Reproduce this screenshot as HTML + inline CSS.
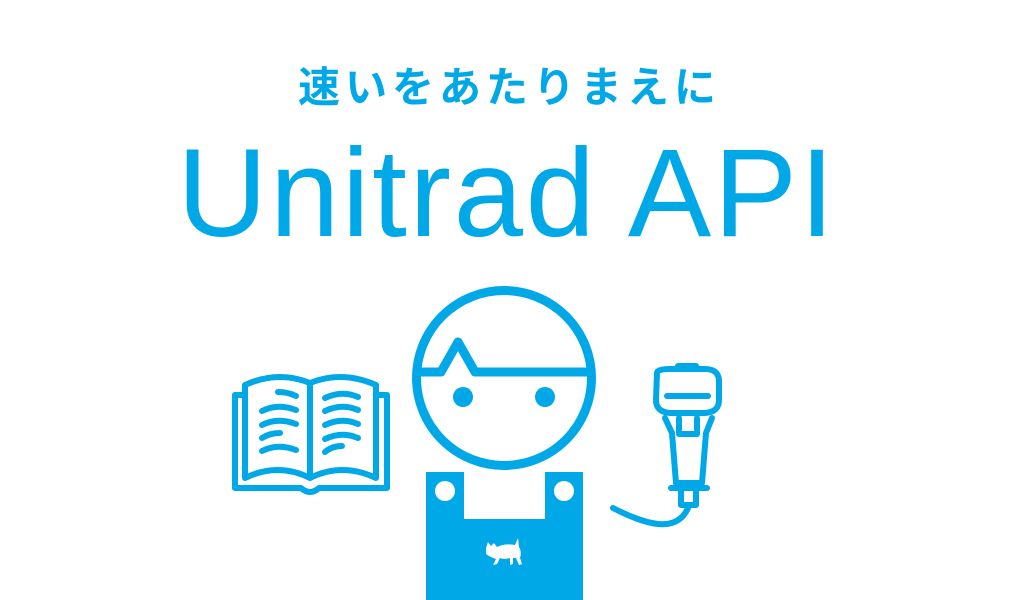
<!DOCTYPE html>
<html><head><meta charset="utf-8"><style>
html,body{margin:0;padding:0;background:#fff;width:1014px;height:600px;overflow:hidden;position:relative}
.jp{position:absolute;left:0;width:1014px;top:54px;text-align:center;font:bold 42px "Liberation Sans","Noto Sans CJK JP",sans-serif;color:#00a8e8;letter-spacing:5px;text-indent:5px}
.en{position:absolute;left:0;width:1014px;top:124px;text-align:center;font:125px "Liberation Sans",sans-serif;color:#00a8e8;letter-spacing:2.5px;line-height:140px}
svg{position:absolute;left:0;top:0}
</style></head><body>
<div class="jp">速いをあたりまえに</div>
<div class="en">Unitrad API</div>
<svg width="1014" height="600" viewBox="0 0 1014 600">
<g fill="none" stroke="#00a8e8" stroke-width="9" stroke-linecap="round" stroke-linejoin="round">
<circle cx="504" cy="378" r="87.5"/>
<path d="M418 372 H441 L458 342 L475 372 H591"/>
</g>
<g fill="#00a8e8">
<circle cx="463" cy="397" r="10"/><circle cx="545" cy="397" r="10"/>
<path d="M426 472 H464 V519 H545 V472 H583 V600 H426 Z"/>
</g>
<g fill="#fff"><circle cx="445" cy="491" r="10"/><circle cx="564" cy="491" r="10"/>
<path d="M486 548 L488 542 L491 546 L494 543 L497 547 Q505 543 515 545 L518 538 L519 547 Q522 552 520 558 L522 564 L519 565 L516 558 L513 558 L513 564 L510 565 L510 558 Q504 560 500 558 L497 564 L493 565 L496 559 Q490 557 486 554 Z"/></g>
<g fill="none" stroke="#00a8e8" stroke-width="6" stroke-linecap="round" stroke-linejoin="round">
<path d="M243 395 H235 V488 H301 Q310 496 319 488 H387 V395 H379"/>
<path d="M245 385 Q278 370 310 383 Q342 370 376 385 V478 Q342 462 310 478 Q278 462 245 478 Z"/>
<path d="M310 383 V478"/>
<path d="M278 392 Q288 392 296 396 M262 411 Q278 403 296 410 M262 425 Q278 417 296 424 M262 438 Q270 433 280 433 M262 451 Q278 443 296 450"/>
<path d="M325 398 Q342 390 358 397 M325 411 Q342 403 358 410 M325 425 Q342 417 358 424 M325 439 Q342 431 358 438 M325 452 Q332 446 342 446"/>
<path d="M657 373 Q657 369 670 369 H705 Q718 369 719 380 V400 Q719 412 705 413 H670 Q656 412 656 400 Z"/>
<path d="M678 366 H696"/>
<path d="M667 396 H708"/>
<path d="M665 418 L672 433 L676 483 H702 L706 433 L712 418"/>
<path d="M679 418 V434 H697 V418"/>
<path d="M671 488 H707"/>
<path d="M681 490 V505 H696 V490"/>
<path d="M613 508 Q640 522 658 524 Q680 526 688 508"/>
</g>
</svg>
</body></html>
